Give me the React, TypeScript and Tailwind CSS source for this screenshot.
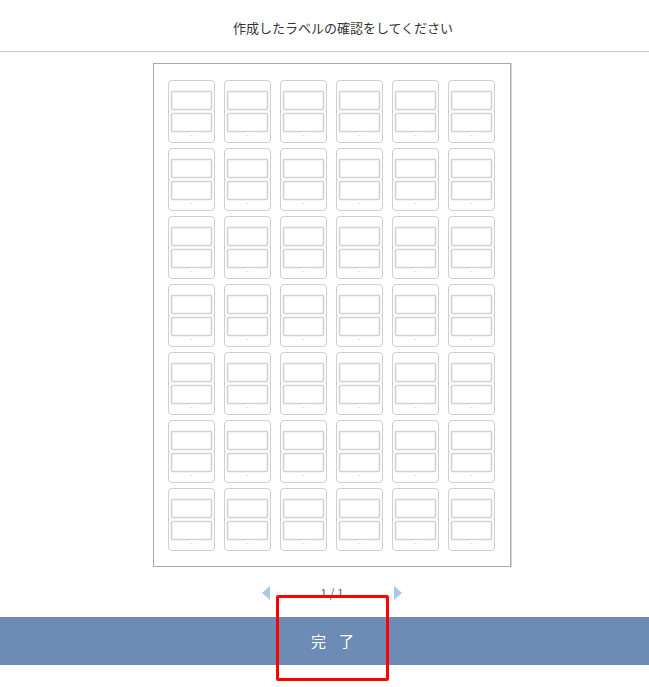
import React from 'react';

const LabelCell = () => (
  <svg width="47" height="63" viewBox="0 0 47 63" className="block">
    <rect x="0.5" y="0.5" width="46" height="62" rx="3.5" fill="#fff" stroke="#cfcfcf" />
    <rect x="3.5" y="11.5" width="40" height="18" rx="1" fill="#fff" stroke="#d2d2d2" strokeWidth="1.6" />
    <rect x="3.5" y="33.5" width="40" height="18" rx="1" fill="#fff" stroke="#d2d2d2" strokeWidth="1.6" />
    <circle cx="0.8" cy="31.5" r="1" fill="#cfcfcf" />
    <circle cx="46.2" cy="31.5" r="1" fill="#cfcfcf" />
    <rect x="22.5" y="55" width="2" height="1" fill="#d8d8d8" />
  </svg>
);

export default function App() {
  const cells = Array.from({ length: 42 });

  return (
    <div className="relative w-[649px] h-[687px] bg-white overflow-hidden" style={{ fontFamily: '"Noto Sans CJK JP", "Noto Sans", sans-serif' }}>
      {/* Header */}
      <div className="h-[52px] border-b border-[#cccccc] flex items-center justify-center pl-[37px] pt-[4px]">
        <span className="text-[13px] text-[#333]">作成したラベルの確認をしてください</span>
      </div>

      {/* Sheet preview */}
      <div className="mt-[11px] ml-[153px] w-[358px] h-[504px] border border-[#a8a8a8] shadow-[1px_0_0_#d8d8d8] pt-[16px] pl-[14px]">
        <div className="grid grid-cols-[repeat(6,47px)] gap-x-[9px] gap-y-[5px]">
          {cells.map((_, i) => (
            <LabelCell key={i} />
          ))}
        </div>
      </div>

      {/* Pager */}
      <div className="mt-[19px] ml-[262px] w-[140px] h-[14px] flex items-center justify-between">
        <svg width="8" height="14" viewBox="0 0 8 14">
          <polygon points="8,0 8,14 0,7" fill="#a9c8ee" />
        </svg>
        <span className="text-[12px] text-[#666] leading-none">1 / 1</span>
        <svg width="8" height="14" viewBox="0 0 8 14">
          <polygon points="0,0 0,14 8,7" fill="#a9c8ee" />
        </svg>
      </div>

      {/* Done bar */}
      <div className="mt-[17px] h-[48px] bg-[#6c8bb5] flex items-center justify-center pl-[29px]">
        <span className="text-white text-[15px] tracking-[13px]">完了</span>
      </div>

      {/* Highlight annotation */}
      <div className="absolute left-[276px] top-[595px] w-[113px] h-[86px] border-[3px] border-[#ff0000] rounded-[2px]" />
    </div>
  );
}
